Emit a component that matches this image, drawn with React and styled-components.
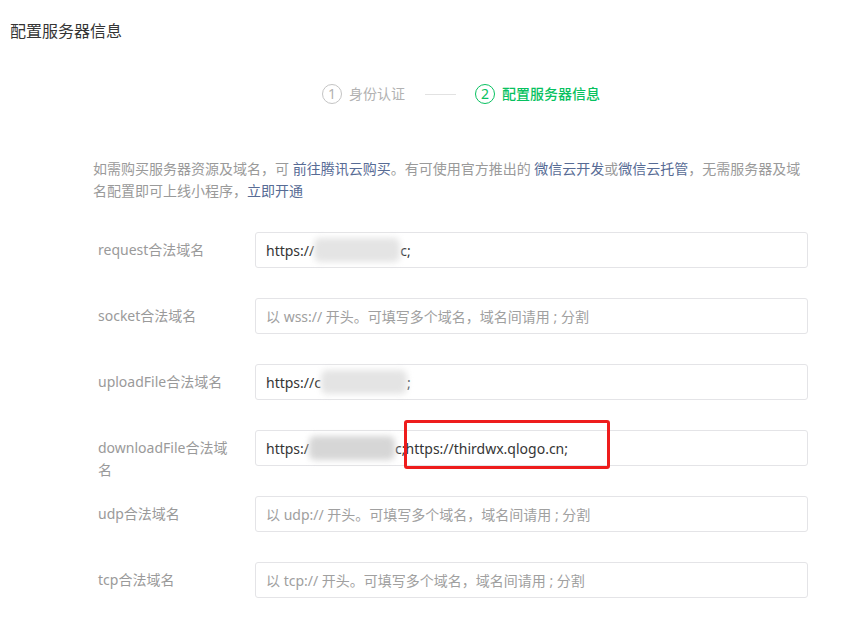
import React from 'react';
import styled, { createGlobalStyle } from 'styled-components';

const GlobalStyle = createGlobalStyle`
  body {
    margin: 0;
    background: #fff;
    font-family: "Noto Sans", "Noto Sans CJK SC", sans-serif;
  }
`;

const Page = styled.div`
  width: 860px;
  min-height: 619px;
  background: #fff;
`;

const Header = styled.div`
  padding: 20px 10px 0;
  font-size: 16px;
  line-height: 22px;
  color: #353535;
`;

const Steps = styled.div`
  display: flex;
  align-items: center;
  padding: 41px 0 0 322px;
  height: 22px;
`;

const Step = styled.div`
  display: flex;
  align-items: center;
  gap: 7px;
  font-size: 14px;
  line-height: 22px;
  color: ${(p) => (p.$active ? '#07c160' : '#b2b2b2')};
  font-weight: ${(p) => (p.$active ? 500 : 400)};
`;

const StepNum = styled.span`
  width: 18px;
  height: 18px;
  border-radius: 50%;
  border: 1px solid ${(p) => (p.$active ? '#07c160' : '#c4c4c4')};
  display: flex;
  align-items: center;
  justify-content: center;
  font-size: 14px;
  font-weight: 400;
  line-height: 1;
`;

const StepLine = styled.span`
  width: 31px;
  height: 1px;
  background: #e2e2e2;
  margin: 0 19px 0 20px;
`;

const Form = styled.div`
  width: 715px;
  padding: 53px 0 0 93px;
`;

const Desc = styled.p`
  margin: 0 0 30px;
  font-size: 14px;
  line-height: 22px;
  color: #9a9a9a;
`;

const Link = styled.a`
  color: #576b95;
  font-weight: 400;
  text-decoration: none;
`;

const Rows = styled.div`
  display: flex;
  flex-direction: column;
  gap: 30px;
`;

const Row = styled.div`
  display: flex;
  align-items: flex-start;
  height: 36px;
  padding-left: 5px;
`;

const Label = styled.label`
  width: 140px;
  margin-right: 17px;
  padding-top: 7px;
  font-size: 14px;
  line-height: 22px;
  color: #9a9a9a;
  word-break: break-all;
`;

const Field = styled.div`
  position: relative;
  flex: 1;
  height: 34px;
  border: 1px solid #e4e4e7;
  border-radius: 3px;
  padding: 0 10px;
  display: flex;
  align-items: center;
  font-size: 14px;
  color: ${(p) => (p.$placeholder ? '#a0a0a0' : '#353535')};
  white-space: nowrap;
`;

const Blur = styled.span`
  display: inline-block;
  width: ${(p) => p.$w}px;
  height: 24px;
  background: ${(p) => p.$tone || '#e4e4e4'};
  filter: blur(3px);
  border-radius: 6px;
`;

const Highlight = styled.span`
  position: absolute;
  left: 148px;
  top: -11px;
  width: 200px;
  height: 43px;
  border: 3px solid #ee1c1c;
  border-radius: 3px;
  pointer-events: none;
`;

export default function App() {
  return (
    <Page>
      <GlobalStyle />
      <Header>配置服务器信息</Header>
      <Steps>
        <Step>
          <StepNum>1</StepNum>
          身份认证
        </Step>
        <StepLine />
        <Step $active>
          <StepNum $active>2</StepNum>
          配置服务器信息
        </Step>
      </Steps>
      <Form>
        <Desc>
          如需购买服务器资源及域名，可 <Link href="#">前往腾讯云购买</Link>。有可使用官方推出的{' '}
          <Link href="#">微信云开发</Link>或<Link href="#">微信云托管</Link>，无需服务器及域名配置即可上线小程序，
          <Link href="#">立即开通</Link>
        </Desc>
        <Rows>
          <Row>
            <Label>request合法域名</Label>
            <Field>
              https://
              <Blur $w={86} />
              c;
            </Field>
          </Row>
          <Row>
            <Label>socket合法域名</Label>
            <Field $placeholder>以 wss:// 开头。可填写多个域名，域名间请用 ; 分割</Field>
          </Row>
          <Row>
            <Label>uploadFile合法域名</Label>
            <Field>
              https://c
              <Blur $w={86} />
              ;
            </Field>
          </Row>
          <Row>
            <Label>downloadFile合法域名</Label>
            <Field>
              https:/
              <Blur $w={86} $tone="#d6d6d6" />
              c;https://thirdwx.qlogo.cn;
              <Highlight />
            </Field>
          </Row>
          <Row>
            <Label>udp合法域名</Label>
            <Field $placeholder>以 udp:// 开头。可填写多个域名，域名间请用 ; 分割</Field>
          </Row>
          <Row>
            <Label>tcp合法域名</Label>
            <Field $placeholder>以 tcp:// 开头。可填写多个域名，域名间请用 ; 分割</Field>
          </Row>
        </Rows>
      </Form>
    </Page>
  );
}
